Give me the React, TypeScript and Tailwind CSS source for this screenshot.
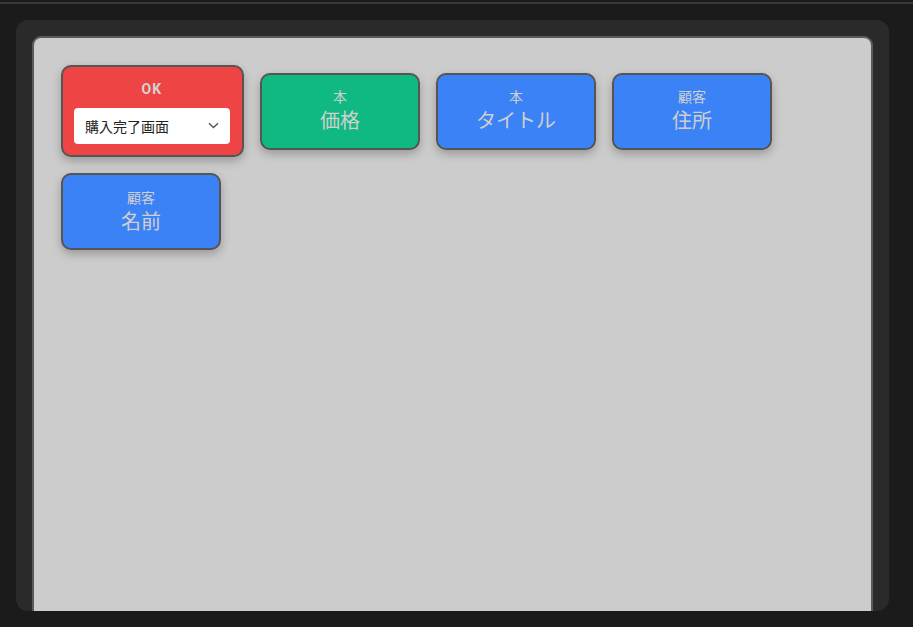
import React from "react";

type Field = { entity: string; name: string; color: string };

const fields: Field[] = [
  { entity: "本", name: "価格", color: "bg-[#10b981]" },
  { entity: "本", name: "タイトル", color: "bg-[#3b82f6]" },
  { entity: "顧客", name: "住所", color: "bg-[#3b82f6]" },
  { entity: "顧客", name: "名前", color: "bg-[#3b82f6]" },
];

function FieldCard({ f }: { f: Field }) {
  return (
    <div
      className={`w-[160px] h-[77px] rounded-[10px] border-2 border-[#555555] ${f.color} shadow-[0_4px_10px_rgba(0,0,0,0.25)] flex flex-col items-center justify-center text-[#cfcfcf]`}
    >
      <div className="text-[14px] leading-[20px]">{f.entity}</div>
      <div className="text-[20px] leading-[28px]">{f.name}</div>
    </div>
  );
}

function ActionCard() {
  return (
    <div className="w-[183px] rounded-[10px] border-2 border-[#555555] bg-[#ef4444] shadow-[0_4px_10px_rgba(0,0,0,0.25)] pl-[11px] pr-[12px] pt-[12px] pb-[11px] flex flex-col">
      <div className="text-center text-[14px] leading-[20px] font-bold tracking-[0.08em] text-[#d4d4d4] font-['Roboto','Noto_Sans',sans-serif]">
        OK
      </div>
      <div className="relative mt-[9px] w-[156px] h-[36px]">
        <select
          defaultValue="購入完了画面"
          className="appearance-none w-full h-full rounded-[4px] bg-white pl-[11px] pr-8 text-[14px] text-[#222222] outline-none"
        >
          <option>購入完了画面</option>
          <option>商品一覧画面</option>
          <option>カート画面</option>
        </select>
        <svg
          className="pointer-events-none absolute right-[11px] top-[14px]"
          width="11"
          height="7"
          viewBox="0 0 11 7"
          fill="none"
        >
          <path d="M1 1.2 L5.5 5.6 L10 1.2" stroke="#555" strokeWidth="1.4" />
        </svg>
      </div>
    </div>
  );
}

export default function App() {
  return (
    <div className="w-[913px] h-[627px] bg-[#1b1b1b] overflow-hidden font-['Noto_Sans','Noto_Sans_CJK_JP',sans-serif]">
      <div className="h-[4px] border-b-2 border-[#3a3a3a]" />
      <div className="mt-[16px] mx-[16px] w-[873px] h-[591px] rounded-[12px] bg-[#2a2a2a] px-[16px] pt-[16px] overflow-hidden">
        <div className="h-[620px] rounded-[9px] border-2 border-[#5a5a5a] bg-[#cccccc] pl-[27px] pr-[26px] pt-[27px]">
          <div className="flex flex-wrap items-center gap-[16px] w-[740px]">
            <ActionCard />
            {fields.map((f, i) => (
              <FieldCard key={i} f={f} />
            ))}
          </div>
        </div>
      </div>
    </div>
  );
}
